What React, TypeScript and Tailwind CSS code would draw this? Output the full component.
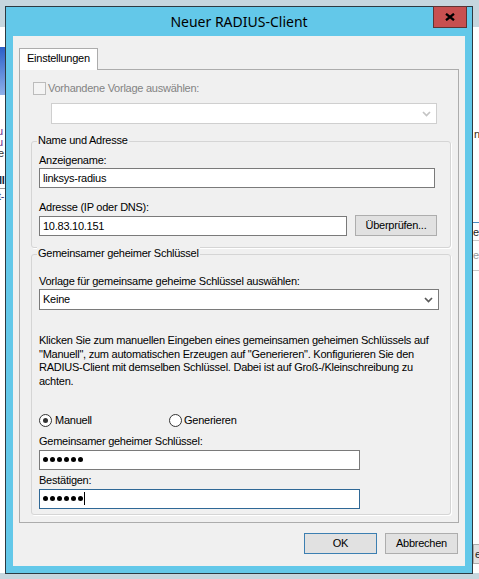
import React from "react";

function Chevron({ color }: { color: string }) {
  return (
    <svg width="9" height="6" viewBox="0 0 9 6" className="shrink-0">
      <path d="M1 1 L4.5 4.5 L8 1" fill="none" stroke={color} strokeWidth="1.7" />
    </svg>
  );
}

function Dots() {
  return (
    <div className="flex items-center gap-[2px]">
      {[0, 1, 2, 3, 4, 5].map((i) => (
        <span key={i} className="block w-[5px] h-[5px] rounded-full bg-black" />
      ))}
    </div>
  );
}

function Radio({ checked }: { checked?: boolean }) {
  return (
    <span className="flex items-center justify-center w-[13px] h-[13px] rounded-full border border-[#333333] bg-white shrink-0">
      {checked && <span className="block w-[5px] h-[5px] rounded-full bg-[#333333]" />}
    </span>
  );
}

export default function App() {
  return (
    <div className="relative w-[479px] h-[579px] overflow-hidden bg-white font-['Liberation_Sans',Arial,sans-serif] text-[11px] leading-[13px] tracking-[-0.25px] text-black">
      {/* desktop behind the dialog */}
      <div className="absolute left-0 top-0 w-full h-[27px] bg-[#c6d6de]" />
      <div className="absolute left-0 top-[573px] w-full h-[6px] bg-[#c6d6de]" />
      <div className="absolute left-0 top-[47px] w-[5px] h-[48px] bg-gradient-to-b from-[#2b5fc8] to-[#8eb0e8]" />
      <div className="absolute left-0 top-[126px] w-[5px] overflow-hidden">
        <div className="ml-[-3px] text-[#6b2c8f] leading-[11px]">u<br />u</div>
      </div>
      <div className="absolute left-0 top-[147px] w-[5px] overflow-hidden">
        <div className="ml-[-2px] text-[#333]">e</div>
      </div>
      <div className="absolute left-0 top-[174px] w-[5px] overflow-hidden">
        <div className="ml-[-1px] font-bold text-[#1c2a3a]">II</div>
      </div>
      <div className="absolute left-0 top-[188px] w-[5px] h-px bg-[#9a9a9a]" />
      <div className="absolute left-0 top-[190px] w-[5px] overflow-hidden">
        <div className="ml-[-2px] text-[#2b3b7a]">t-</div>
      </div>
      <div className="absolute left-[474px] top-[128px] text-[#3a2a10]">n</div>
      <div className="absolute left-[473px] top-[222px] w-[6px] h-px bg-[#4a8cc4]" />
      <div className="absolute left-[473px] top-[226px] text-[#222]">er</div>
      <div className="absolute left-[473px] top-[240px] w-[6px] h-px bg-[#c8c8c8]" />
      <div className="absolute left-[473px] top-[249px] text-[#9a9a9a]">er</div>
      <div className="absolute left-[473px] top-[270px] w-[6px] h-px bg-[#c8c8c8]" />
      <div className="absolute left-[473px] top-[544px] w-[10px] h-[20px] border border-[#adadad] bg-[#e1e1e1] pl-[1px] pt-[3px] text-[#222]">e</div>

      {/* dialog window */}
      <div className="absolute left-[5px] top-[6px] w-[468px] h-[568px] border border-[#2d3a42] bg-[#63c8e9] flex flex-col">
        <div className="h-[29px] flex items-center justify-center font-['Noto_Sans',sans-serif] text-[14px] leading-none tracking-normal text-black">
          Neuer RADIUS-Client
        </div>
        <div className="absolute right-[5px] top-[-1px] w-[34px] h-[22px] bg-[#c75050] border border-[#5e3434] flex items-center justify-center">
          <svg width="10" height="8" viewBox="0 0 10 8">
            <path d="M1 0.8 L9 7.2 M9 0.8 L1 7.2" stroke="#000" strokeWidth="2.3" fill="none" />
          </svg>
        </div>

        <div className="mx-[7px] h-[530px] bg-[#f0f0f0] flex flex-col">
          <div className="ml-[6px] mt-[12px] flex flex-col">
            <div className="relative z-10 w-[79px] h-[22px] mb-[-1px] bg-white border border-b-0 border-[#acacac] pl-[7px] pt-[3px]">
              Einstellungen
            </div>
            <div className="w-[440px] h-[454px] border border-[#acacac] bg-[#f0f0f0] pl-[13px] pt-[12px] flex flex-col">
              <div className="flex items-center gap-[2px] h-[13px]">
                <span className="block w-[13px] h-[13px] border border-[#bcbcbc] bg-[#f4f4f4]" />
                <span className="text-[#838383]">Vorhandene Vorlage auswählen:</span>
              </div>
              <div className="ml-[18px] mt-[8px] w-[386px] h-[21px] border border-[#cfcfcf] bg-white flex items-center justify-end pr-[5px]">
                <Chevron color="#c4c4c4" />
              </div>

              {/* Name und Adresse */}
              <div className="relative ml-[-2px] mt-[17px] w-[420px] h-[107px] rounded-[3px] border border-[#d5d5d5] shadow-[1px_1px_0_#ffffff] pl-[7px] pt-[12px] flex flex-col">
                <span className="absolute left-[5px] top-[-8px] px-[1px] bg-[#f0f0f0]">Name und Adresse</span>
                <div>Anzeigename:</div>
                <div className="mt-[1px] w-[396px] h-[20px] border border-[#7a7a7a] bg-white pl-[3px] flex items-center">
                  linksys-radius
                </div>
                <div className="mt-[13px]">Adresse (IP oder DNS):</div>
                <div className="mt-[1px] flex items-end gap-[8px]">
                  <div className="w-[308px] h-[20px] border border-[#7a7a7a] bg-white pl-[3px] flex items-center">
                    10.83.10.151
                  </div>
                  <div className="w-[82px] h-[21px] border border-[#adadad] bg-[#e1e1e1] flex items-center justify-center">
                    Überprüfen...
                  </div>
                </div>
              </div>

              {/* Gemeinsamer geheimer Schlüssel */}
              <div className="relative ml-[-2px] mt-[6px] w-[420px] h-[261px] rounded-[3px] border border-[#d5d5d5] shadow-[1px_1px_0_#ffffff] pl-[7px] pt-[20px] flex flex-col">
                <span className="absolute left-[5px] top-[-8px] px-[1px] bg-[#f0f0f0]">Gemeinsamer geheimer Schlüssel</span>
                <div>Vorlage für gemeinsame geheime Schlüssel auswählen:</div>
                <div className="mt-[1px] w-[400px] h-[21px] border border-[#7a7a7a] bg-white pl-[3px] pr-[5px] flex items-center justify-between">
                  <span>Keine</span>
                  <Chevron color="#5a5a5a" />
                </div>
                <p className="mt-[24px] leading-[13.7px] whitespace-nowrap">
                  Klicken Sie zum manuellen Eingeben eines gemeinsamen geheimen Schlüssels auf
                  <br />
                  "Manuell", zum automatischen Erzeugen auf "Generieren". Konfigurieren Sie den
                  <br />
                  RADIUS-Client mit demselben Schlüssel. Dabei ist auf Groß-/Kleinschreibung zu
                  <br />
                  achten.
                </p>
                <div className="mt-[25px] flex items-center h-[13px]">
                  <div className="w-[130px] flex items-center gap-[3px]">
                    <Radio checked />
                    <span>Manuell</span>
                  </div>
                  <div className="flex items-center gap-[2px]">
                    <Radio />
                    <span>Generieren</span>
                  </div>
                </div>
                <div className="mt-[8px]">Gemeinsamer geheimer Schlüssel:</div>
                <div className="mt-[2px] w-[321px] h-[20px] border border-[#7a7a7a] bg-white pl-[3px] flex items-center">
                  <Dots />
                </div>
                <div className="mt-[4px]">Bestätigen:</div>
                <div className="mt-[2px] w-[321px] h-[20px] border border-[#2f6896] bg-white pl-[3px] flex items-center">
                  <Dots />
                  <span className="block ml-[1px] w-px h-[13px] bg-black" />
                </div>
              </div>
            </div>
          </div>

          <div className="mt-[10px] pr-[7px] flex justify-end gap-[8px]">
            <div className="w-[73px] h-[21px] border border-[#3c7fb1] bg-[#e1e1e1] flex items-center justify-center">OK</div>
            <div className="w-[73px] h-[21px] border border-[#adadad] bg-[#e1e1e1] flex items-center justify-center">Abbrechen</div>
          </div>
        </div>
      </div>
    </div>
  );
}
